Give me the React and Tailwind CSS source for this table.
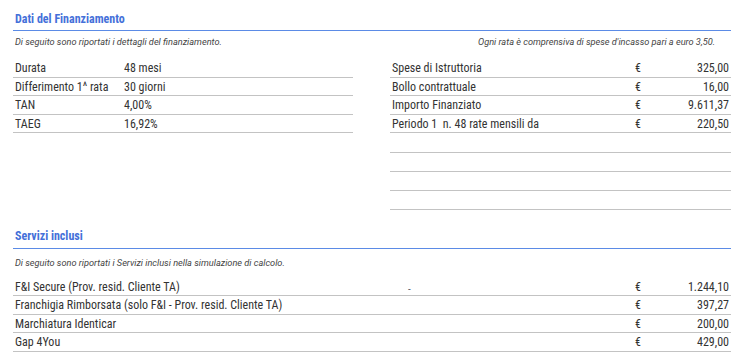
const finanziamento = [
  ["Durata", "48 mesi"],
  ["Differimento 1^ rata", "30 giorni"],
  ["TAN", "4,00%"],
  ["TAEG", "16,92%"],
];

const costi = [
  ["Spese di Istruttoria", "325,00"],
  ["Bollo contrattuale", "16,00"],
  ["Importo Finanziato", "9.611,37"],
  ["Periodo 1  n. 48 rate mensili da", "220,50"],
];

const servizi = [
  ["F&I Secure (Prov. resid. Cliente TA)", "1.244,10"],
  ["Franchigia Rimborsata (solo F&I - Prov. resid. Cliente TA)", "397,27"],
  ["Marchiatura Identicar", "200,00"],
  ["Gap 4You", "429,00"],
];

const SectionTitle = ({ children, pb }) => (
  <div
    className={`h-[31px] flex items-end border-b border-[#5b8be6] pl-[2px] ${pb}`}
  >
    <span className="font-bold text-[12px] leading-[14px] text-[#4470d9]">
      {children}
    </span>
  </div>
);

const AmountRow = ({ label, value, dash }) => (
  <div className="h-[18.5px] flex items-center border-b border-[#c3c3c3]">
    {dash ? (
      <>
        <span className="w-[395px] pl-[2px] whitespace-pre">{label}</span>
        <span className="text-[11px] leading-none mt-[6px] text-[#4b5563]">-</span>
        <span className="flex-1" />
      </>
    ) : (
      <span className="flex-1 pl-[2px] whitespace-pre">{label}</span>
    )}
    <span className="w-[50px]">€</span>
    <span className="w-[46px] text-right pr-[2px]">{value}</span>
  </div>
);

export default function App() {
  return (
    <div className="bg-white min-h-[360px] font-['Roboto',sans-serif] font-stretch-semi-condensed text-[12px] text-[#333] pl-[13px]">
      <div className="w-[718px]">
        {/* Dati del Finanziamento */}
        <SectionTitle pb="pb-[4px]">Dati del Finanziamento</SectionTitle>
        <div className="h-[22px] flex items-center justify-between px-[2px] pr-[16px] italic font-stretch-normal text-[9.2px] text-[#444]">
          <span>Di seguito sono riportati i dettagli del finanziamento.</span>
          <span>Ogni rata è comprensiva di spese d'incasso pari a euro 3,50.</span>
        </div>

        <div className="flex justify-between mt-[6.3px]">
          <div className="w-[340px]">
            {finanziamento.map(([l, v]) => (
              <div
                key={l}
                className="h-[18.5px] flex items-center border-b border-[#c3c3c3]"
              >
                <span className="w-[111px] pl-[2px]">{l}</span>
                <span>{v}</span>
              </div>
            ))}
          </div>

          <div className="w-[341px]">
            {costi.map(([l, v]) => (
              <AmountRow key={l} label={l} value={v} />
            ))}
            <div className="h-[19.6px] border-b border-[#c3c3c3]" />
            <div className="h-[19px] border-b border-[#c3c3c3]" />
            <div className="h-[19px] border-b border-[#c3c3c3]" />
            <div className="h-[19px] border-b border-[#c3c3c3]" />
          </div>
        </div>

        {/* Servizi inclusi */}
        <div className="mt-[7.9px]">
          <SectionTitle pb="pb-[5px]">Servizi inclusi</SectionTitle>
        </div>
        <div className="h-[29px] flex items-center px-[2px] italic font-stretch-normal text-[9.2px] text-[#444]">
          Di seguito sono riportati i Servizi inclusi nella simulazione di calcolo.
        </div>
        <div>
          {servizi.map(([l, v], i) => (
            <AmountRow key={l} label={l} value={v} dash={i === 0} />
          ))}
        </div>
      </div>
    </div>
  );
}
